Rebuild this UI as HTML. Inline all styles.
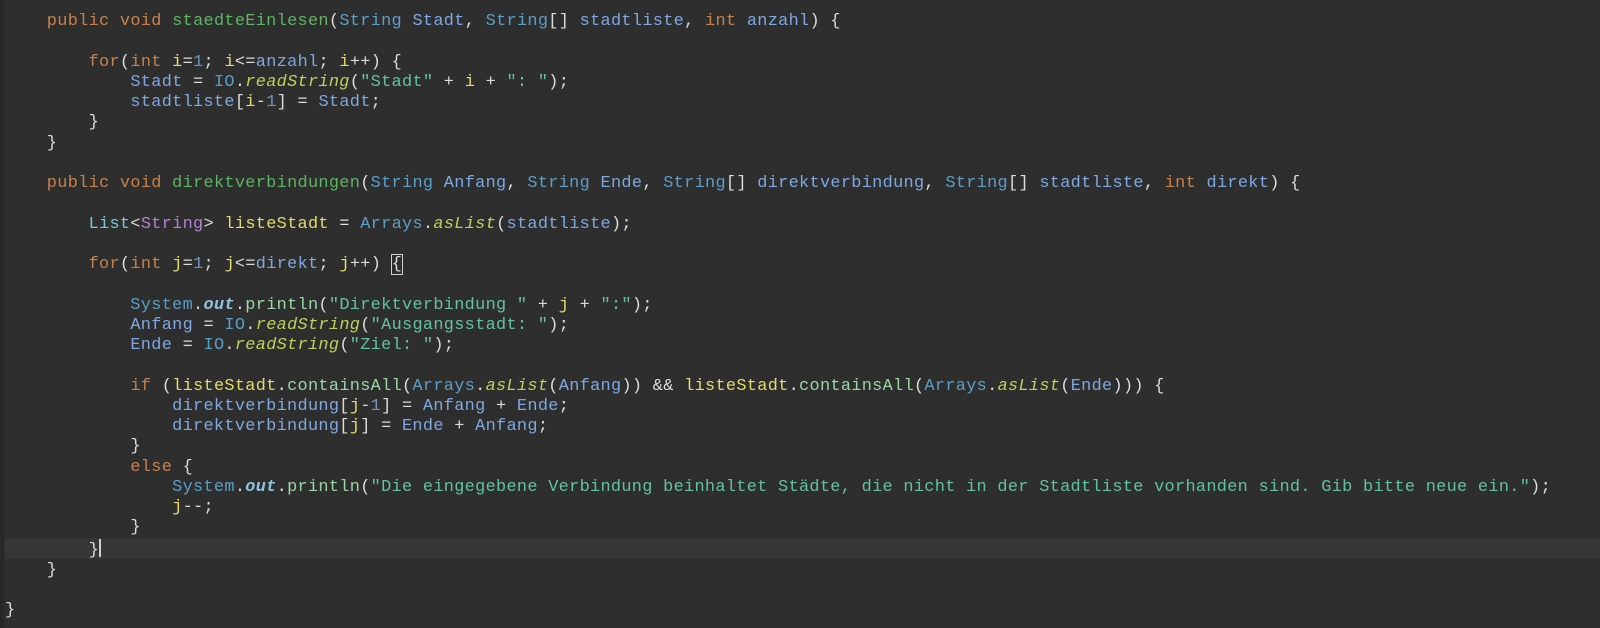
<!DOCTYPE html>
<html><head><meta charset="utf-8"><style>
html,body{margin:0;padding:0;}
body{width:1600px;height:628px;background:#2e2e2e;overflow:hidden;position:relative;}
.strip{position:absolute;left:0;top:0;width:4px;height:628px;background:#282828;}
.hl{position:absolute;left:5px;top:538px;width:1595px;height:21px;background:#363636;}
pre{position:absolute;left:5px;top:12px;margin:0;font-family:"Liberation Mono","DejaVu Sans Mono",monospace;font-size:16.9px;line-height:20.25px;letter-spacing:0.31px;color:#dcdcdc;}
.k{color:#c8814a}.m{color:#5db462}.t{color:#5a9fc8}.p{color:#7ea8e2}.v{color:#e3dc6c}.n{color:#6e94c8}.s{color:#62c2a0}.c{color:#9ad6a6}.r{color:#b9d35c;font-style:italic}.o{color:#8ec3e0;font-weight:bold;font-style:italic}.l{color:#74c9d9}.g{color:#b47fd6}
.cur{display:inline-block;width:2px;height:18px;background:#cfcfcf;vertical-align:-3px;}
.br{outline:1px solid #cfcfcf;}
</style></head><body>
<div class="strip"></div><div class="hl"></div>
<pre>    <span class="k">public void</span> <span class="m">staedteEinlesen</span>(<span class="t">String</span> <span class="p">Stadt</span>, <span class="t">String</span>[] <span class="p">stadtliste</span>, <span class="k">int</span> <span class="p">anzahl</span>) {

        <span class="k">for</span>(<span class="k">int</span> <span class="v">i</span>=<span class="n">1</span>; <span class="v">i</span>&lt;=<span class="p">anzahl</span>; <span class="v">i</span>++) {
            <span class="p">Stadt</span> = <span class="t">IO</span>.<span class="r">readString</span>(<span class="s">"Stadt"</span> + <span class="v">i</span> + <span class="s">": "</span>);
            <span class="p">stadtliste</span>[<span class="v">i</span>-<span class="n">1</span>] = <span class="p">Stadt</span>;
        }
    }

    <span class="k">public void</span> <span class="m">direktverbindungen</span>(<span class="t">String</span> <span class="p">Anfang</span>, <span class="t">String</span> <span class="p">Ende</span>, <span class="t">String</span>[] <span class="p">direktverbindung</span>, <span class="t">String</span>[] <span class="p">stadtliste</span>, <span class="k">int</span> <span class="p">direkt</span>) {

        <span class="l">List</span>&lt;<span class="g">String</span>&gt; <span class="v">listeStadt</span> = <span class="t">Arrays</span>.<span class="r">asList</span>(<span class="p">stadtliste</span>);

        <span class="k">for</span>(<span class="k">int</span> <span class="v">j</span>=<span class="n">1</span>; <span class="v">j</span>&lt;=<span class="p">direkt</span>; <span class="v">j</span>++) <span class="br">{</span>

            <span class="t">System</span>.<span class="o">out</span>.<span class="c">println</span>(<span class="s">"Direktverbindung "</span> + <span class="v">j</span> + <span class="s">":"</span>);
            <span class="p">Anfang</span> = <span class="t">IO</span>.<span class="r">readString</span>(<span class="s">"Ausgangsstadt: "</span>);
            <span class="p">Ende</span> = <span class="t">IO</span>.<span class="r">readString</span>(<span class="s">"Ziel: "</span>);

            <span class="k">if</span> (<span class="v">listeStadt</span>.<span class="c">containsAll</span>(<span class="t">Arrays</span>.<span class="r">asList</span>(<span class="p">Anfang</span>)) &amp;&amp; <span class="v">listeStadt</span>.<span class="c">containsAll</span>(<span class="t">Arrays</span>.<span class="r">asList</span>(<span class="p">Ende</span>))) {
                <span class="p">direktverbindung</span>[<span class="v">j</span>-<span class="n">1</span>] = <span class="p">Anfang</span> + <span class="p">Ende</span>;
                <span class="p">direktverbindung</span>[<span class="v">j</span>] = <span class="p">Ende</span> + <span class="p">Anfang</span>;
            }
            <span class="k">else</span> {
                <span class="t">System</span>.<span class="o">out</span>.<span class="c">println</span>(<span class="s">"Die eingegebene Verbindung beinhaltet Städte, die nicht in der Stadtliste vorhanden sind. Gib bitte neue ein."</span>);
                <span class="v">j</span>--;
            }
        }<span class="cur"></span>
    }

}</pre>
</body></html>
